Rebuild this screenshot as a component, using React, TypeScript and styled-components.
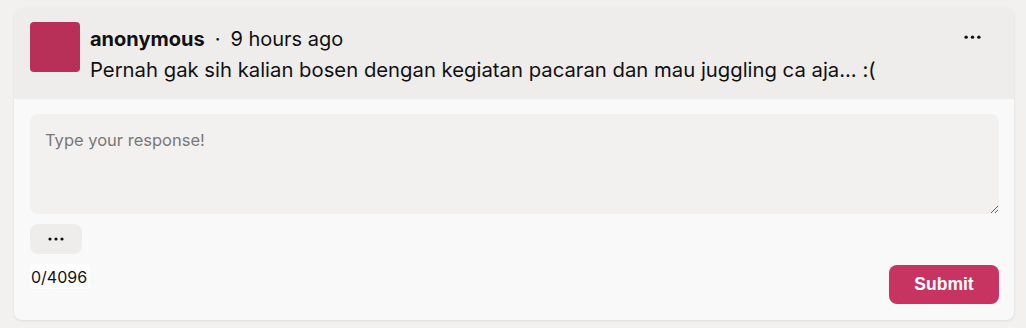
import React from "react";
import styled, { createGlobalStyle } from "styled-components";

const Global = createGlobalStyle`
  html, body { margin: 0; padding: 0; background: #f2f1ef; }
  body { font-family: Inter, "Noto Sans", sans-serif; color: #111; }
`;

const Page = styled.div`
  padding: 8px 12px 8px 14px;
`;

const Card = styled.div`
  width: 1000px;
  background: #f9f9f9;
  border-radius: 8px;
  overflow: hidden;
  box-shadow: 0 1px 3px rgba(0, 0, 0, 0.08);
`;

const Header = styled.div`
  display: flex;
  align-items: flex-start;
  gap: 10px;
  background: #eeedeb;
  padding: 14px 16px 14px 16px;
  height: 91px;
  box-sizing: border-box;
`;

const Avatar = styled.div`
  width: 50px;
  height: 50px;
  border-radius: 4px;
  background: #b82f58;
  flex-shrink: 0;
`;

const Meta = styled.div`
  flex: 1;
  display: flex;
  flex-direction: column;
  gap: 5px;
  padding-top: 4px;
`;

const NameLine = styled.div`
  font-size: 20px;
  line-height: 26px;
  display: flex;
  align-items: center;
`;

const Name = styled.span`
  font-weight: 700;
`;

const Dot = styled.span`
  margin: 0 10px;
`;

const Message = styled.div`
  font-size: 20.3px;
  line-height: 26px;
`;

const IconButton = styled.button`
  border: none;
  background: transparent;
  padding: 0;
  margin: 13px 17px 0 0;
  display: flex;
  cursor: pointer;
`;

const Body = styled.div`
  padding: 15px 15px 16px 16px;
  display: flex;
  flex-direction: column;
`;

const TextArea = styled.textarea`
  width: 969px;
  height: 100px;
  box-sizing: border-box;
  border: none;
  border-radius: 8px;
  background: #f2f1f0;
  padding: 15px 15px;
  font-family: Inter, "Noto Sans", sans-serif;
  font-size: 16.5px;
  line-height: 22px;
  resize: vertical;
  outline: none;
  &::placeholder { color: #7a7877; }
`;

const MoreButton = styled.button`
  margin-top: 10px;
  width: 52px;
  height: 30px;
  border: none;
  border-radius: 8px;
  background: #eeedeb;
  display: flex;
  align-items: center;
  justify-content: center;
  cursor: pointer;
`;

const Footer = styled.div`
  display: flex;
  justify-content: space-between;
  align-items: flex-start;
  margin-top: 10px;
`;

const Counter = styled.span`
  background: #fff;
  font-size: 16px;
  line-height: 22px;
  padding: 2px 3px 1px 1px;
  border-radius: 4px;
`;

const Submit = styled.button`
  margin-top: 1px;
  width: 110px;
  height: 39px;
  border: none;
  border-radius: 8px;
  background: #c73462;
  color: #fff;
  font-family: "Liberation Sans", Arial, sans-serif;
  font-weight: 700;
  font-size: 17.5px;
  cursor: pointer;
`;

const Dots = ({ size = 18 }: { size?: number }) => (
  <svg width={size} height={size / 4} viewBox="0 0 16 4">
    <circle cx="2" cy="2" r="1.6" fill="#111" />
    <circle cx="8" cy="2" r="1.6" fill="#111" />
    <circle cx="14" cy="2" r="1.6" fill="#111" />
  </svg>
);

export default function App() {
  return (
    <Page>
      <Global />
      <Card>
        <Header>
          <Avatar />
          <Meta>
            <NameLine>
              <Name>anonymous</Name>
              <Dot>·</Dot>
              <span>9 hours ago</span>
            </NameLine>
            <Message>
              Pernah gak sih kalian bosen dengan kegiatan pacaran dan mau juggling ca aja... :(
            </Message>
          </Meta>
          <IconButton aria-label="more">
            <Dots size={17} />
          </IconButton>
        </Header>
        <Body>
          <TextArea placeholder="Type your response!" />
          <MoreButton aria-label="options">
            <Dots size={16} />
          </MoreButton>
          <Footer>
            <Counter>0/4096</Counter>
            <Submit>Submit</Submit>
          </Footer>
        </Body>
      </Card>
    </Page>
  );
}
